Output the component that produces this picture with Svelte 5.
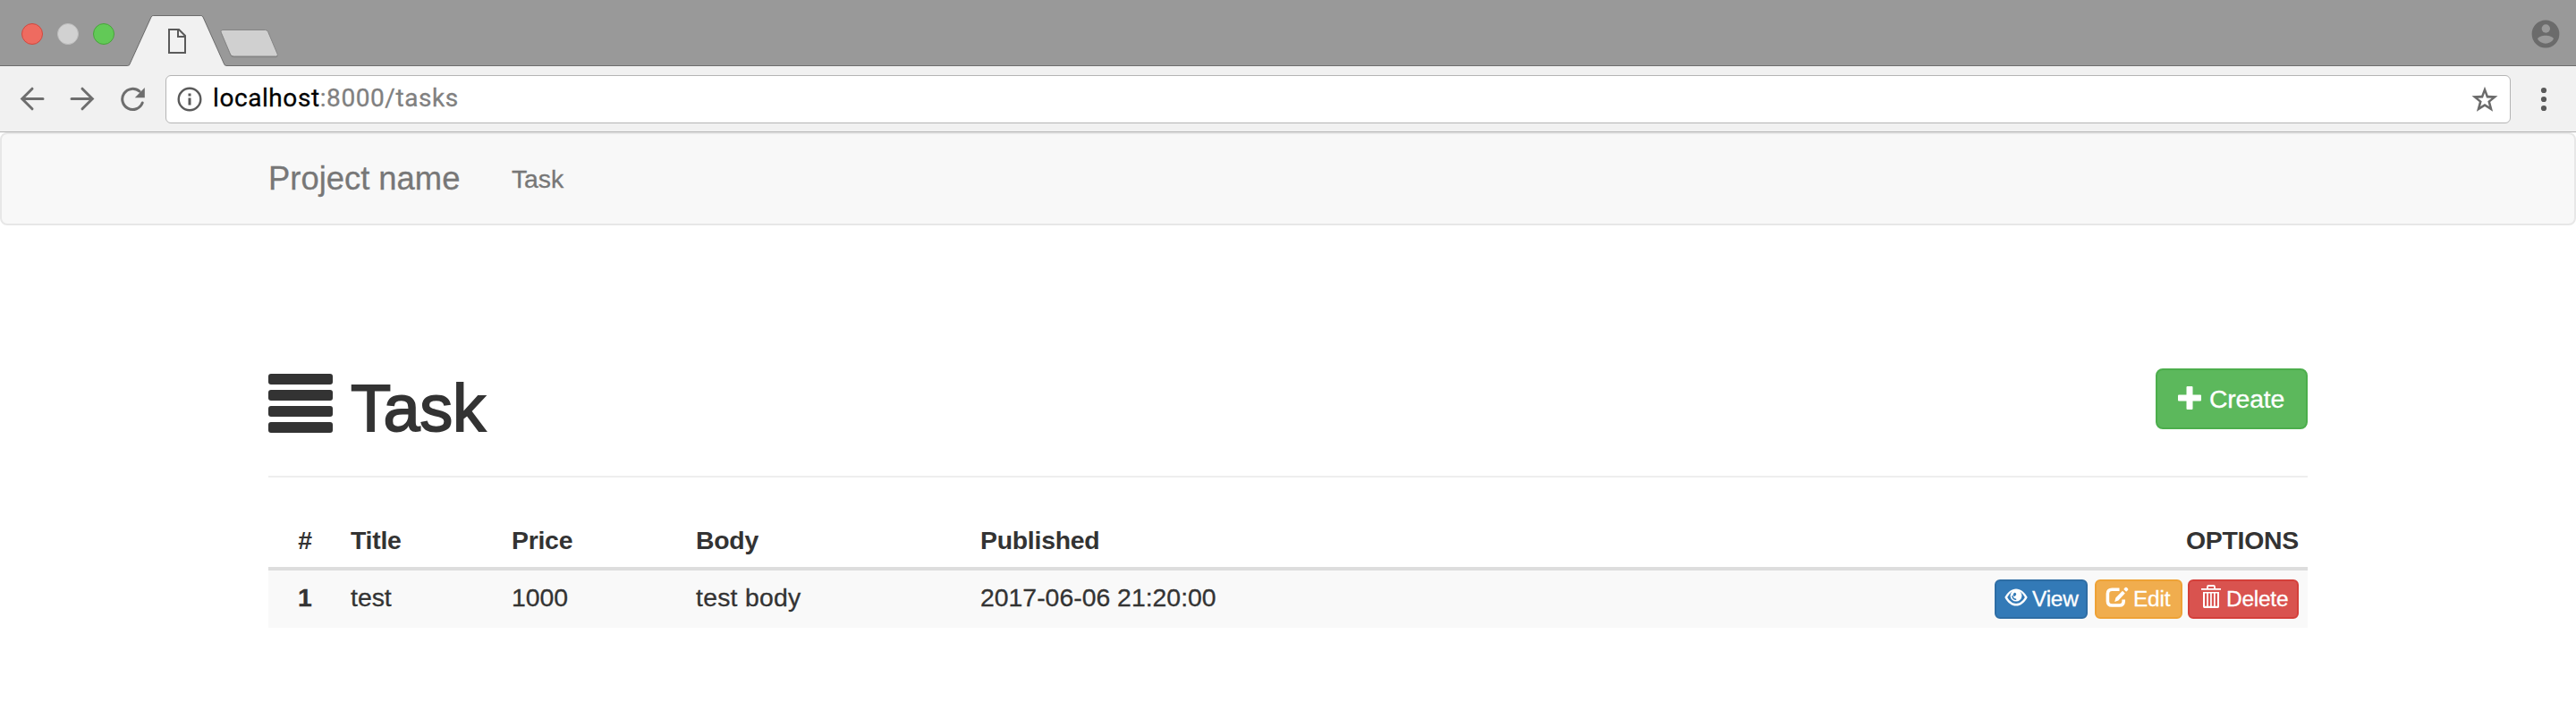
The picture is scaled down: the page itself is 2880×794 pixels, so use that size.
<script>
  const tasks = [
    { id: 1, title: 'test', price: 1000, body: 'test body', published: '2017-06-06 21:20:00' }
  ];
</script>

<div class="window">
  <header class="tabstrip">
    <div class="lights">
      <span class="light close"></span>
      <span class="light minimize"></span>
      <span class="light zoom"></span>
    </div>
    <svg class="tabs" width="176" height="74" viewBox="140 0 176 74">
      <path d="M140 73.5H143Q144.4 73.3 145 71.8L168.9 19.2Q169.7 17.5 171.5 17.5H224.5Q226.3 17.5 227.1 19.2L250.6 71.8Q251.4 73.4 253 73.5H316" fill="none" stroke="#6c6c6c" />
      <path d="M142 74Q144.6 73.8 145.5 72L169.4 19.4Q170 18 171.5 18H224.5Q226 18 226.6 19.4L250.2 72Q251.2 73.8 253.5 74Z" fill="#f1f1f1" />
      <path d="M249 34.3H296.5Q298.7 34.3 299.6 36.2L310.2 61.5Q311 64.2 308.7 64.2H261.5Q258.8 64.2 257.7 62L247 36.4Q246.3 34.3 249 34.3Z" fill="#777" opacity=".6" />
      <path d="M249 33.5H296.5Q298.7 33.5 299.6 35.4L310.2 60.5Q311 63 308.7 63H261.5Q258.8 63 257.7 61L247 35.8Q246.3 33.5 249 33.5Z" fill="#d0d0d0" stroke="#858585" />
      <path d="M189 33H200L207 40V59H189ZM199 33V41H207" fill="none" stroke="#5a5a5a" stroke-width="2" />
    </svg>
    <svg class="profile" width="32" height="32" viewBox="0 0 32 32">
      <circle cx="16" cy="16" r="15.4" fill="#6b6b6b" />
      <circle cx="16.3" cy="10" r="4.7" fill="#999" />
      <path d="M7 21.6C9.5 16.6 22.5 16.6 25 21.6C21.5 28.4 10.5 28.4 7 21.6Z" fill="#999" />
    </svg>
  </header>

  <div class="toolbar">
    <div class="controls">
      <svg width="28" height="28" viewBox="0 0 28 28"><path d="M26 13.5H3M14 2.2L2.7 13.5L14 24.8" /></svg>
      <svg width="28" height="28" viewBox="0 0 28 28"><path d="M2 13.5H25M14 2.2L25.3 13.5L14 24.8" /></svg>
      <svg width="28" height="28" viewBox="0 0 28 28">
        <path d="M22 5.2A11.6 11.6 0 1 0 25.2 18" />
        <path d="M27.8 1V12.2H16.8Z" class="solid" />
      </svg>
    </div>
    <div class="omnibox">
      <svg width="28" height="28" viewBox="0 0 28 28">
        <circle cx="14" cy="14" r="12.3" fill="none" stroke="#5a5a5a" stroke-width="2.4" />
        <path d="M12.5 7.5H15.5V10.5H12.5ZM12.5 12.5H15.5V20.5H12.5Z" fill="#5a5a5a" />
      </svg>
      <span class="url"><b>localhost</b>:8000/tasks</span>
      <svg class="star" width="30" height="30" viewBox="0 0 30 30">
        <path fill-rule="evenodd" fill="#6b6b6b" d="M15 .8L18.7 10.7L29.5 11.2L21.2 18.1L24.1 28.8L15 23L5.9 28.8L8.8 18.1L.5 11.2L11.3 10.7ZM15 7.7L13 13.4L7.3 13.8L11.7 17.3L10.1 23.1L15 19.9L19.9 23.1L18.3 17.3L22.7 13.8L17 13.4Z" />
      </svg>
    </div>
    <svg class="more" width="8" height="28" viewBox="0 0 8 28" fill="#5a5a5a">
      <circle cx="4" cy="4" r="3.1" /><circle cx="4" cy="14" r="3.1" /><circle cx="4" cy="24" r="3.1" />
    </svg>
  </div>

  <nav class="navbar">
    <span class="brand">Project name</span>
    <span class="navlink">Task</span>
  </nav>

  <main>
    <div class="page-header">
      <h1>
        <svg width="72" height="66" viewBox="0 0 72 66" fill="#333">
          <rect width="72" height="12" rx="3" /><rect y="18" width="72" height="12" rx="3" />
          <rect y="36" width="72" height="12" rx="3" /><rect y="54" width="72" height="12" rx="3" />
        </svg>
        <span>Task</span>
      </h1>
      <button class="btn create">
        <svg width="26" height="26" viewBox="0 0 26 26" fill="#fff">
          <path d="M10.5 0H15.5Q16.5 0 16.5 1V9.5H25Q26 9.5 26 10.5V15.5Q26 16.5 25 16.5H16.5V25Q16.5 26 15.5 26H10.5Q9.5 26 9.5 25V16.5H1Q0 16.5 0 15.5V10.5Q0 9.5 1 9.5H9.5V1Q9.5 0 10.5 0Z" />
        </svg>
        <span>Create</span>
      </button>
    </div>

    <table>
      <colgroup>
        <col class="c-id" /><col class="c-title" /><col class="c-price" /><col class="c-body" /><col class="c-pub" /><col />
      </colgroup>
      <thead>
        <tr>
          <th class="center">#</th><th>Title</th><th>Price</th><th>Body</th><th>Published</th><th class="right">OPTIONS</th>
        </tr>
      </thead>
      <tbody>
        {#each tasks as task}
          <tr>
            <td class="center"><strong>{task.id}</strong></td>
            <td>{task.title}</td>
            <td>{task.price}</td>
            <td class="text">{task.body}</td>
            <td>{task.published}</td>
            <td>
              <div class="actions">
                <button class="btn xs view">
                  <svg width="26" height="20" viewBox="0 0 26 20">
                    <path fill="#fff" d="M.3 10C3.5 4 8 .4 13 .4S22.5 4 25.7 10C22.5 16 18 19.6 13 19.6S3.5 16 .3 10Z" />
                    <path fill="#337ab7" d="M3.2 10C4.8 7 6.5 5 8.8 3.7H17.2C19.5 5 21.2 7 22.8 10C20.4 14.4 17 16.9 13 16.9S5.6 14.4 3.2 10Z" />
                    <circle cx="13" cy="8.2" r="6.4" fill="#fff" />
                    <path fill="none" stroke="#337ab7" stroke-width="1.6" d="M8.9 8.3C9 11.2 11 12.5 13.2 12.2" />
                    <ellipse cx="11.4" cy="6.9" rx="1.6" ry="2.1" fill="#337ab7" transform="rotate(35 11.4 6.9)" />
                  </svg>
                  <span>View</span>
                </button>
                <button class="btn xs edit">
                  <svg width="26" height="24" viewBox="0 0 26 24">
                    <path fill="none" stroke="#fff" stroke-width="3.6" d="M15.5 3.2H7.2Q2.4 3.2 2.4 8V16.2Q2.4 21 7.2 21H15.5Q20.2 21 20.2 16.2V14.5" />
                    <path fill="#fff" d="M10.2 17.1L11.4 12.6L19 4.7L21.8 7.4L14.4 15.6ZM20.3 3L21.9 1.1Q22.8 .3 23.8 1.1L25 2.3Q25.8 3.2 25 4.1L23.1 5.8Z" />
                  </svg>
                  <span>Edit</span>
                </button>
                <button class="btn xs delete">
                  <svg width="22" height="26" viewBox="0 0 22 26">
                    <path fill="none" stroke="#fff" stroke-width="1.8" d="M7 4V2.2Q7 1 8.2 1H13.8Q15 1 15 2.2V4" />
                    <path fill="#fff" d="M0 4H22V5.8H0ZM2 8H20V9.6H2ZM2 9H4V24H2ZM6.2 9H7.9V24H6.2ZM10.1 9H11.8V24H10.1ZM14 9H15.7V24H14ZM18 9H20V24H18ZM2 23.8H20V24.6Q20 26 18.6 26H3.4Q2 26 2 24.6Z" />
                  </svg>
                  <span>Delete</span>
                </button>
              </div>
            </td>
          </tr>
        {/each}
      </tbody>
    </table>
  </main>
</div>

<style>
  :global(body) { background: #fff; }
  .window {
    width: 2880px; height: 794px; overflow: hidden;
    font: 28.4px/40px "Liberation Sans", Arial, sans-serif; color: #333;
    -webkit-text-stroke: .3px;
  }
  svg { display: block; flex: none; }

  .tabstrip {
    display: flex; align-items: flex-start; height: 74px; box-sizing: border-box;
    background: linear-gradient(#999, #999) 0 0 / 100% 73px no-repeat, #6c6c6c;
  }
  .lights { display: flex; gap: 16px; width: 140px; padding: 26px 0 0 24px; box-sizing: border-box; }
  .light { width: 24px; height: 24px; border-radius: 50%; box-sizing: border-box; border: 1px solid; flex: none; }
  .close { background: #ee6b60; border-color: #d0483f; }
  .minimize { background: #d1d1d1; border-color: #bcbcbc; }
  .zoom { background: #62c957; border-color: #48a43b; }
  .profile { margin: 22px 18px 0 auto; }

  .toolbar {
    display: flex; align-items: center; height: 74px; box-sizing: border-box;
    padding: 0 32px 0 22px; background: #f1f1f1; border-bottom: 1px solid #b2b2b2;
  }
  .controls { display: flex; gap: 28px; width: 163px; }
  .controls path { fill: none; stroke: #6e6e6e; stroke-width: 3; stroke-linecap: round; }
  .controls .solid { fill: #6e6e6e; stroke: none; }
  .omnibox {
    flex: 1; display: flex; align-items: center; height: 54px; box-sizing: border-box;
    padding: 0 13px 0 12px; background: #fff; border: 1px solid #b4b4b4; border-radius: 6px;
  }
  .url { margin: 0 0 1px 12px; font: 28px/40px Roboto, sans-serif; letter-spacing: .58px; color: #808080; }
  .url b { font-weight: 400; color: #000; }
  .star { margin-left: auto; }
  .more { margin-left: 33px; }

  .navbar {
    display: flex; height: 104px; box-sizing: border-box; padding: 30px 298px;
    background: #f8f8f8; border: 2px solid #e7e7e7; border-radius: 8px; color: #777;
  }
  .brand { width: 272px; font-size: 36.4px; }
  .navlink { letter-spacing: -.1px; }

  main { width: 2280px; margin: 160px auto 0; }
  .page-header {
    display: flex; justify-content: space-between; align-items: flex-start;
    height: 120px; border-bottom: 2px solid #eee;
  }
  h1 { display: flex; margin: 0; gap: 20px; padding-top: 6px; font-size: 74px; line-height: 78px; font-weight: 400; }
  h1 span { -webkit-text-stroke: 1.8px #333; letter-spacing: -.4px; }
  .btn {
    display: flex; align-items: center; box-sizing: border-box; margin: 0; color: #fff;
    border: 2px solid; border-radius: 8px; font: 28.4px/40px "Liberation Sans", Arial, sans-serif;
    letter-spacing: -.2px; -webkit-text-stroke: .3px;
  }
  .create { width: 170px; height: 68px; padding: 0 0 0 23px; gap: 9px; background: #5cb85c; border-color: #4cae4c; }
  .create svg { margin-top: -2px; }

  table { width: 2280px; margin-top: 40px; border-collapse: collapse; table-layout: fixed; }
  .c-id { width: 82px; } .c-title { width: 180px; } .c-price { width: 206px; }
  .c-body { width: 318px; } .c-pub { width: 900px; }
  th, td { padding: 10px; height: 40px; text-align: left; vertical-align: top; }
  thead { background: linear-gradient(#ddd, #ddd) 0 100% / 100% 4px no-repeat; }
  th { padding-bottom: 14px; letter-spacing: -.25px; -webkit-text-stroke: 0; }
  tbody tr { background: #f9f9f9; }
  td.text { letter-spacing: .25px; }
  .center { text-align: center; }
  .right { text-align: right; }
  .actions { display: flex; justify-content: flex-end; }
  .xs { height: 44px; padding: 0; border-radius: 6px; font-size: 24.4px; line-height: 36px; }
  .view { width: 104px; padding-left: 9px; gap: 5px; background: #337ab7; border-color: #2e6da4; }
  .edit { width: 98px; margin-left: 8px; padding-left: 10px; gap: 5px; background: #f0ad4e; border-color: #eea236; }
  .delete { width: 124px; margin-left: 6px; padding-left: 13px; gap: 6px; background: #d9534f; border-color: #d43f3a; }
  .view svg { margin-top: -4px; }
  .edit svg { margin-top: -5px; }
  .delete svg { margin-top: -6px; }
  .xs span { margin-top: -1px; }
</style>
